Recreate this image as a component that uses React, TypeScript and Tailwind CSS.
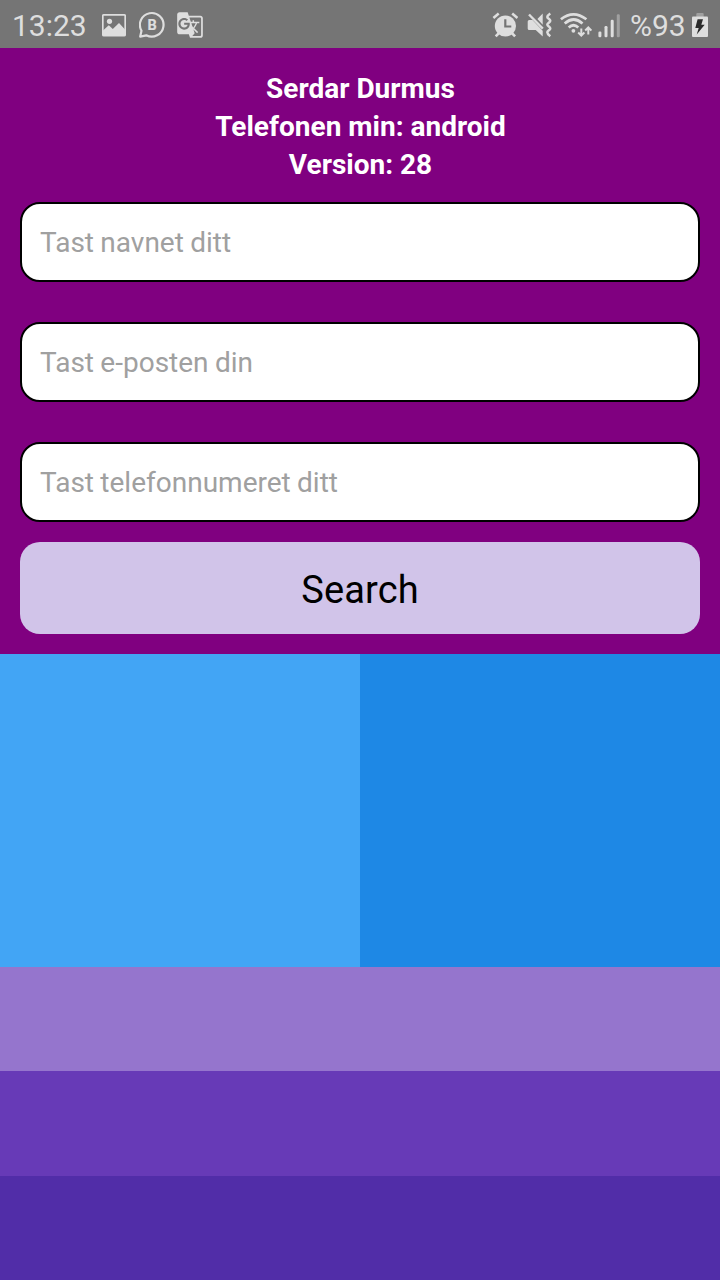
import type { ReactNode } from "react";
import { MdGTranslate } from "react-icons/md";

const fields = ["Tast navnet ditt", "Tast e-posten din", "Tast telefonnumeret ditt"];

function StatusIcon({ className, viewBox, children }: { className: string; viewBox: string; children: ReactNode }) {
  return (
    <svg className={`h-12 shrink-0 ${className}`} viewBox={viewBox} fill="currentColor" aria-hidden="true">
      {children}
    </svg>
  );
}

function ImageIcon() {
  return (
    <StatusIcon className="w-6" viewBox="0 0 24 48">
      <rect x="0.800" y="14.800" width="22.400" height="20.800" rx="1" fill="none" stroke="currentColor" strokeWidth="1.700" />
      <circle cx="7.500" cy="21.300" r="2.600" />
      <path d="M1 30.500 6.800 25.200l4 3.800 6.200-6 6 6.500v6.500H1Z" />
    </StatusIcon>
  );
}

function BusinessChatIcon() {
  return (
    <StatusIcon className="w-[27px]" viewBox="0.5 0 27 48">
      <path
        d="M1.700 36.600 3 30.700A11.800 11.800 0 1 1 7.800 35.300Z"
        fill="none"
        stroke="currentColor"
        strokeWidth="2.200"
        strokeLinejoin="round"
      />
      <text x="13.600" y="30.200" textAnchor="middle" fontSize="14.500" fontWeight="700" stroke="currentColor" strokeWidth="0.200">
        B
      </text>
    </StatusIcon>
  );
}

function AlarmIcon() {
  return (
    <StatusIcon className="w-[26px]" viewBox="492 0 26 48">
      <circle cx="505.400" cy="26" r="10.600" />
      <g fill="none" stroke="currentColor" strokeWidth="2.600">
        <path d="m493.400 17.900 5.300-4.400M512.200 13.500l5.300 4.400M499.500 32.500l-3.800 3.800M511.300 32.500l3.800 3.800" />
      </g>
      <path d="M505.300 19.200v7.300h6" fill="none" stroke="#757575" strokeWidth="2.200" />
    </StatusIcon>
  );
}

function MuteVibrateIcon() {
  return (
    <StatusIcon className="w-[25px]" viewBox="527 0 25 48">
      <path d="M527.700 21.500q0-1.500 1.500-1.500h3.300l10.200 10.700v5.800l-7-6.500h-6.500a1.500 1.500 0 0 1-1.500-1.500ZM542.700 13.500v11.300l-5.300-5.800Z" />
      <path d="m529 14.500 13.800 14.200" stroke="currentColor" strokeWidth="2.400" />
      <path
        d="m550.300 13.500q-3 2-3 3.500c0 1.500 3 2.200 3 3.800s-3 2.200-3 3.800 3 2.200 3 3.800-3 2.200-3 3.900q0 1.800 3 3.900"
        fill="none"
        stroke="currentColor"
        strokeWidth="2.500"
      />
    </StatusIcon>
  );
}

function WifiIcon() {
  return (
    <StatusIcon className="w-8" viewBox="560 0 32 48">
      <g fill="none" stroke="currentColor" strokeWidth="2.700">
        <path d="M560.900 19.300q12.500-10 25.500 0M564.700 23.500q8.900-8 17.800 0M568.700 27.500q4.800-4.500 9.600 0" />
        <path d="M581.300 28.500v7M578.200 32.500l3.100 3 3.100-3M588.300 34.500v-7M585.200 30.500l3.100-3 3.100 3" strokeWidth="2" />
      </g>
      <circle cx="573.400" cy="30.800" r="1.900" />
    </StatusIcon>
  );
}

function SignalIcon() {
  return (
    <StatusIcon className="w-[22px]" viewBox="598 0 22 48">
      <rect x="598.400" y="31.600" width="3" height="5.600" rx="1.200" />
      <rect x="604.500" y="26" width="3" height="11.200" rx="1.200" />
      <rect x="610.700" y="19.800" width="3" height="17.400" rx="1.200" />
      <rect x="616.800" y="14.200" width="3" height="23" rx="1.200" fill="#a0a0a0" />
    </StatusIcon>
  );
}

function BatteryIcon() {
  return (
    <StatusIcon className="w-4" viewBox="0 0 16 48">
      <path d="M4.300 17v-3a1 1 0 0 1 1-1h5.400a1 1 0 0 1 1 1v3Z" fill="#a0a0a0" />
      <rect y="16.600" width="16" height="20.400" rx="1" />
      <path d="M5.600 19.200H11l-1.700 5.600h3.400L4.700 34.500l2-6.500H3.300Z" fill="#2b2b2b" />
    </StatusIcon>
  );
}

export default function App() {
  return (
    <div className="flex h-[1280px] w-[720px] flex-col overflow-hidden bg-[#800080] font-['Roboto',sans-serif]">
      <header className="flex h-12 shrink-0 items-center justify-between bg-[#757575] pr-3 pl-3 text-[#dedede]">
        <div className="flex items-center">
          <span className="w-[90px] pt-[3px] text-[30px] leading-[45px]">13:23</span>
          <ImageIcon />
          <div className="w-[13px]" />
          <BusinessChatIcon />
          <MdGTranslate className="ml-[10px] mt-[2px] size-[28px]" />
        </div>
        <div className="flex items-center">
          <AlarmIcon />
          <div className="w-[9px]" />
          <MuteVibrateIcon />
          <div className="w-2" />
          <WifiIcon />
          <div className="w-[6px]" />
          <SignalIcon />
          <span className="w-[72px] pt-[3px] pl-[10px] text-[30px] leading-[45px]">%93</span>
          <BatteryIcon />
        </div>
      </header>
      <section className="flex h-[606px] shrink-0 flex-col px-5 pt-[22px]">
        <h1 className="pl-px text-center text-[28px] leading-[38px] font-bold text-white">
          <span className="block">Serdar Durmus</span>
          <span className="block">Telefonen min: android</span>
          <span className="block">Version: 28</span>
        </h1>
        <div className="mt-[18px] flex flex-col gap-10">
          {fields.map((f) => (
            <input
              key={f}
              placeholder={f}
              className="h-20 w-full rounded-[20px] border-2 border-black bg-white px-[18px] text-[28px] [word-spacing:-0.6px] placeholder:text-[#a0a0a0]"
            />
          ))}
        </div>
        <button className="mt-5 h-[92px] w-full rounded-[20px] bg-[#d1c4e9] pt-1 text-[38px] tracking-[0.1px] text-black">Search</button>
      </section>
      <div className="grid h-[313px] shrink-0 grid-cols-2">
        <div className="bg-[#42a5f5]" />
        <div className="bg-[#1e88e5]" />
      </div>
      <div className="h-[104px] shrink-0 bg-[#9575cd]" />
      <div className="h-[105px] shrink-0 bg-[#673ab7]" />
      <div className="h-[104px] shrink-0 bg-[#512da8]" />
    </div>
  );
}
